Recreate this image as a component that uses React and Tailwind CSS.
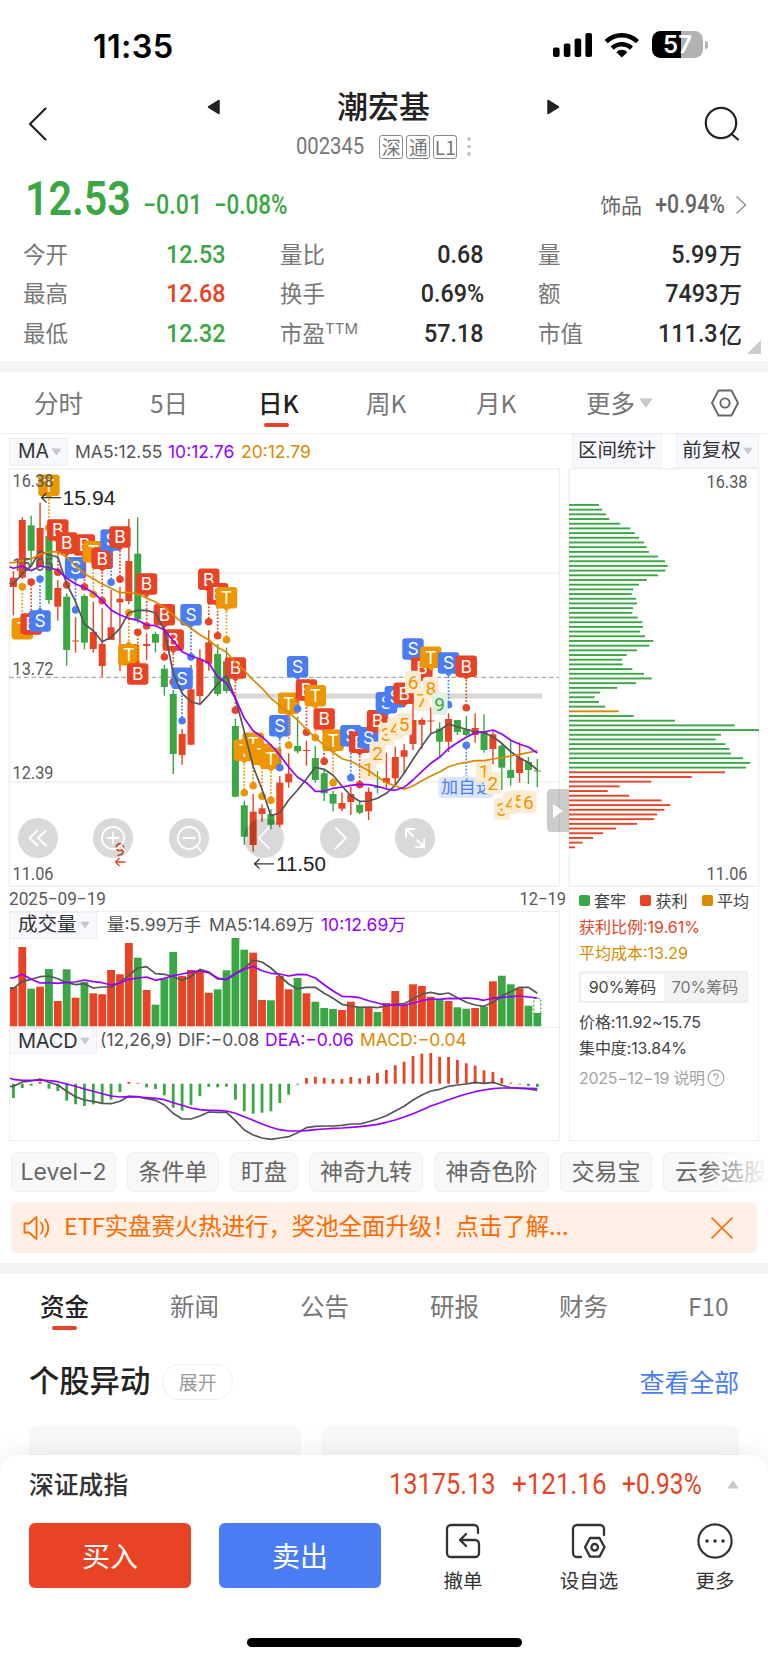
import clsx from 'clsx'

const RED = '#e84324'
const GREEN = '#3ba744'
const BLUE = '#4a7cf3'
const AMBER = '#ee9600'
const GOLD = '#d98a00'
const GREY = '#555555'
const PURPLE = '#9600ff'

const X0 = 13.4
const STEP = 8.88
const x = (i) => X0 + i * STEP

// [direction, high, body top, body bottom, low]
const CANDLES = [
  ['r', 571, 577.7, 587, 615.3], ['r', 517.3, 520, 577.7, 579], ['g', 515.7, 525.3, 550.7, 566], ['r', 502.7, 528, 566, 566.7],
  ['g', 534, 535.7, 600, 604], ['r', 580, 588, 606.7, 620.7], ['g', 593.3, 596.7, 650, 665.7], ['r', 617.3, 640.5, 641.5, 652.7],
  ['g', 594.3, 596, 642.7, 649.3], ['r', 601.7, 631.7, 649, 652.7], ['r', 608.3, 644, 666, 676.7], ['r', 590, 627.3, 640, 640],
  ['r', 586.7, 598.7, 602.3, 671], ['r', 519, 561, 601, 604.3], ['g', 517.3, 553.7, 619.3, 623.3], ['r', 633.3, 644, 646, 660],
  ['g', 631.7, 634, 642.7, 652.3], ['g', 665, 668.7, 687, 695.7], ['g', 690, 694, 754, 774], ['r', 729, 734, 755, 764.7],
  ['r', 665, 689.3, 744.7, 745], ['r', 649.3, 659, 696, 704], ['r', 630, 642.3, 663.7, 670.7], ['g', 644, 654, 694, 696],
  ['g', 647.7, 661.3, 691, 693.3], ['g', 718.7, 726, 796.7, 797.3], ['g', 800.7, 805.3, 836.7, 844.7], ['r', 794, 811.7, 845, 851.7],
  ['r', 804.3, 808.3, 814, 821.7], ['g', 809.3, 814, 824.7, 829.3], ['r', 776, 782.7, 824.7, 827], ['r', 753.3, 773.7, 782.3, 787.7],
  ['g', 716.7, 746, 751.3, 753.3], ['r', 740.7, 750, 751, 765.7], ['g', 746, 758, 780, 782.7], ['g', 770, 773.3, 793.3, 801],
  ['g', 790.7, 794, 803.7, 811.3], ['r', 792.7, 803, 808.7, 811.3], ['r', 786.7, 794, 802, 815], ['g', 801.7, 804.7, 812.7, 814.3],
  ['r', 787.7, 791.7, 811.3, 820], ['g', 771, 787, 788, 793.3], ['r', 752.7, 778, 782.7, 789.3], ['r', 746.7, 757, 778.3, 785.3],
  ['r', 744, 750.3, 756.7, 773.7], ['r', 702.7, 720, 744, 750], ['r', 717.7, 720, 724.7, 749], ['r', 707.3, 720.5, 721.5, 734],
  ['g', 722.3, 728.7, 741.7, 756.7], ['r', 713.3, 719, 741.7, 752], ['g', 720, 720, 732, 735], ['g', 716, 729.3, 735, 736],
  ['r', 713.3, 728, 735, 742.7], ['g', 714.3, 731, 750, 752.7], ['r', 730, 734.3, 749, 764.3], ['g', 743.3, 745.7, 767.7, 790],
  ['g', 741, 770, 778, 785.7], ['r', 742.3, 757.7, 773, 782.7], ['g', 756.7, 762, 770, 784], ['g', 759, 770.5, 771.5, 787],
]

const MA5 = [584, 573.7, 566, 551, 555, 557, 584, 601.7, 624, 630.7, 641.7, 637.3, 628.3, 612.7, 610.3, 610.3, 613, 630, 673, 693.3, 701.7, 704.3, 695, 684, 675.7, 698.3, 731.7, 766.7, 789.3, 815.7, 812.7, 800, 790, 779, 767.3, 769.3, 775.3, 786, 795.7, 801.3, 801, 798.3, 793.3, 785.3, 773.3, 759.3, 746, 733.7, 730.3, 724, 726.7, 729.3, 731.7, 732.7, 736.7, 743.3, 751.7, 758.3, 762.3, 770]
const MA10 = [568.3, 566, 570.7, 566, 567.7, 570, 578.3, 584, 587.7, 592.7, 600.7, 610, 615, 618.3, 620.3, 625, 625.7, 630, 640.7, 651.7, 656, 659, 663, 676.7, 683.3, 698.3, 718.3, 731, 736.7, 745, 755, 767, 777.3, 782.7, 791.3, 791.3, 788.3, 787, 785.3, 784.3, 784.7, 786.3, 789, 790.3, 787.3, 780, 771.3, 763.3, 757.3, 748.7, 742.7, 737.3, 732.7, 732, 730, 734, 740.3, 744.3, 747, 753]
const MA20 = [562.7, 560.7, 559, 554.3, 552, 551.7, 557.3, 566, 573.7, 578.7, 584, 588.3, 592.7, 592.3, 594, 598, 602, 607, 615, 622.3, 628.3, 634.7, 640, 647.3, 652.3, 662.3, 670.7, 680, 688.3, 698.3, 705.5, 712.7, 720, 729.3, 737.7, 745.3, 752.3, 758.7, 761.3, 765.7, 770.7, 776.7, 782.7, 785.7, 789.3, 786, 780.7, 776, 772, 766.7, 764, 762.3, 760.7, 760.7, 759, 757.7, 756, 754.3, 752.7, 750.7]

// [index, kind, badge centre, dot centre]
const MARKS = [
  [1, 'T', 628.7, 586.7], [2, 'B', 624, 582], [3, 'S', 621, 579], [4, 'T', 485.3, 527.7], [5, 'B', 530, 572.3], [6, 'B', 543, 585],
  [7, 'S', 567.7, 610], [8, 'B', 545, 587], [9, 'T', 551.7, 594.3], [10, 'B', 558.3, 600.7], [11, 'S', 540, 582.3], [12, 'B', 537, 579.3],
  [13, 'T', 654.7, 612.7], [14, 'B', 674, 632.3], [15, 'B', 584, 626], [17, 'B', 614.7, 657], [18, 'B', 640, 682], [19, 'S', 678.3, 720.7],
  [20, 'S', 614.7, 657], [22, 'B', 579.3, 621.7], [23, 'B', 593.7, 635.7], [24, 'T', 597.7, 639.7], [25, 'B', 668, 710.3],
  [26, 'T', 750.3, 792.7], [27, 'T', 743.3, 785.7], [28, 'T', 754.3, 796.3], [29, 'T', 758.3, 800.3], [30, 'S', 725.7, 767.7],
  [31, 'T', 703.3, 745.3], [32, 'S', 666.7, 708.7], [33, 'B', 690, 732.3], [34, 'T', 695.7, 737.7], [35, 'B', 719, 761.3],
  [36, 'T', 740.3, 782.7], [38, 'S', 735.7, 777.7], [39, 'B', 742.3, 784.7], [40, 'S', 737.7], [41, 'B', 720.7], [42, 'S', 702.7],
  [43, 'S', 696.7], [44, 'B', 693.3], [45, 'S', 649], [46, 'B', 668], [47, 'T', 657.3], [49, 'S', 663, 704.7], [51, 'B', 666.3, 707.7],
]
const MARK_COLOR = { B: RED, S: BLUE, T: AMBER }

// nine-turn counters: [candle, count, centre]
const TURNS = [
  [40, 1, 769.3], [41, 2, 752.7], [42, 3, 734], [43, 4, 728.3], [44, 5, 724.3], [45, 6, 682], [46, 7, 700], [47, 8, 688], [48, 9, 703.7],
  [53, 1, 771.3], [54, 2, 783], [55, 3, 809], [56, 4, 802.7], [57, 5, 801.3], [58, 6, 802.3],
]

const VOL = [987, 947, 988.7, 986.7, 969, 1001, 969.3, 997.7, 981.7, 993.3, 994.3, 970, 974.3, 943, 957.7, 990, 1004.7, 978.3, 952, 976, 970, 970, 992.7, 989.3, 970.3, 938, 949.7, 952.7, 1000, 1000.3, 976, 989.3, 978, 993.3, 1001.7, 1008, 1009, 1010, 1001.7, 1007.3, 1007, 1012, 1003, 991, 1005, 984.3, 986, 996.7, 999.7, 1001, 1007.3, 1008.7, 1008, 1006.7, 981.3, 975.7, 984.3, 988.3, 1005.7, 1013]
const VOL5 = [988.3, 981.3, 979.3, 976.7, 976, 978.7, 982.7, 984.7, 983.7, 988, 987, 987, 982.3, 975.3, 968, 966.7, 973.7, 974.3, 976.7, 980.3, 976.7, 969.3, 972, 979, 979.3, 973.3, 968.3, 960.3, 962, 968, 976, 984, 988.7, 987.3, 987.3, 993.3, 998.3, 1004.3, 1006, 1007.3, 1007, 1007.7, 1006, 1004.3, 1003.7, 999, 994, 992.3, 994.3, 993, 997.7, 1002.3, 1005, 1006.3, 1002.3, 996, 991.7, 987.3, 987.3, 993.3]
const VOL10 = [978, 974.3, 979.3, 983, 982.7, 983.3, 982.3, 982, 980, 981.7, 982.7, 985, 983, 979.3, 978, 977, 980.3, 978.3, 975.7, 974, 972, 971, 972.7, 978, 979.7, 974, 969.3, 966.3, 970.7, 973.3, 974, 976, 974.3, 974.7, 978, 984.7, 991, 996.3, 996.7, 997.7, 1000.7, 1003, 1005.3, 1005, 1005.3, 1003, 1000.7, 999, 999.3, 998.3, 998.7, 998, 998.7, 1000.3, 998, 997.3, 996.7, 996, 997, 998]

const ZERO = 1083.7
const HIST = [1098, 1088, 1085.7, 1081.7, 1088.7, 1091, 1100.7, 1104.3, 1106, 1104.3, 1103.7, 1099.7, 1092, 1082, 1083, 1087.3, 1089, 1095.3, 1107.7, 1110.7, 1105, 1096, 1087, 1087.3, 1086.7, 1099.7, 1111.3, 1113.7, 1112.7, 1111.3, 1103, 1094.7, 1084.7, 1078, 1076.7, 1077.7, 1079, 1079, 1077, 1078.3, 1075.7, 1073, 1070, 1065.3, 1061.7, 1056, 1053.7, 1052.7, 1056.7, 1057, 1060, 1063.3, 1065.7, 1070.3, 1072, 1078, 1082.7, 1084.5, 1086, 1087]
const DIF = [1086.3, 1082, 1081, 1079, 1082.3, 1085, 1091.3, 1096.7, 1100, 1101.3, 1103.3, 1103.7, 1101.3, 1096.3, 1096.7, 1098.7, 1100.3, 1105, 1113.3, 1119, 1119, 1116, 1112, 1112.3, 1112.3, 1120.7, 1130, 1135, 1138, 1139.3, 1138, 1136.7, 1132.7, 1127.7, 1126.3, 1126, 1126, 1125.3, 1124, 1124, 1121.7, 1119, 1115.7, 1111, 1106.3, 1100, 1095, 1091, 1089.3, 1086.3, 1085, 1084, 1082.3, 1083.3, 1082.3, 1085.3, 1087.7, 1088.3, 1089, 1090.3]
const DEA = [1079.3, 1080.3, 1080.3, 1080, 1080.7, 1081.7, 1084, 1086.3, 1089, 1091.3, 1093.7, 1096, 1097, 1096.7, 1097, 1097.7, 1098.3, 1099.7, 1102.7, 1105.3, 1108, 1109.7, 1110.3, 1110.3, 1111, 1113.3, 1116.7, 1120.3, 1124, 1127.3, 1129.7, 1131, 1131, 1130.7, 1129.7, 1129, 1128.3, 1128, 1127.3, 1126.7, 1125.7, 1124.3, 1122.3, 1120, 1117, 1113.7, 1110, 1106, 1103, 1099.7, 1096.7, 1094, 1091.7, 1090, 1088.7, 1088, 1088, 1088, 1088.3, 1088.7]

const CHIPS = [30, 33.3, 37, 40.3, 51.3, 61.3, 65.7, 70, 75, 77.7, 80, 89, 96, 98.7, 96.3, 89, 77.7, 70, 64.3, 62.7, 67, 68, 64, 63.3, 68.7, 73.3, 74, 71, 76, 84.3, 80.3, 68, 57.7, 53, 53.7, 63.3, 75, 82.7, 67, 48.3, 31, 25.7, 30, 36.3, 49.7, 64.7, 106, 165.7, 190, 152, 146.7, 156.3, 160.3, 162, 174, 181.3, 177, 156, 122.7, 82.3, 50.7, 38.7, 60.3, 92.7, 101.3, 95.3, 88, 85, 68, 47, 34, 24, 13.7, 6]

const QUOTES = [
  [['今开', '12.53', 'text-[#3ba744]'], ['量比', '0.68'], ['量', '5.99', '', '万']],
  [['最高', '12.68', 'text-[#e84324]'], ['换手', '0.69%'], ['额', '7493', '', '万']],
  [['最低', '12.32', 'text-[#3ba744]'], ['市盈', '57.18'], ['市值', '111.3', '', '亿']],
]

const TOOLS = [
  ['Level−2', 'w-[105px]'], ['条件单', 'w-[92px]'], ['盯盘', 'w-[68px]'], ['神奇九转', 'w-[114px]'],
  ['神奇色阶', 'w-[115px]'], ['交易宝', 'w-[92px]'], ['云参选股', 'w-[116px]'],
]

const line = (ys) => ys.map((y, i) => `${x(i).toFixed(1)},${y}`).join(' ')

function Line({ ys, color, start }) {
  return <polyline points={`9.5,${start ?? ys[0]} ${line(ys)}`} fill="none" stroke={color} strokeWidth="1.7" strokeLinejoin="round" />
}

function Caret({ className }) {
  return (
    <svg viewBox="0 0 12 9" className={clsx('shrink-0', className)}>
      <path d="M1 1h10L6 8z" fill="#c9c9c9" stroke="#c9c9c9" strokeLinejoin="round" />
    </svg>
  )
}

function AxisText({ x: tx, y, w = 41, children }) {
  return (
    <text x={tx} y={y + 6.4} textLength={w} lengthAdjust="spacingAndGlyphs" fontFamily="Roboto" fontSize="18" fill="#5a5a5a">{children}</text>
  )
}

function Mark({ i, kind, y, dot }) {
  const cx = x(i)
  const c = MARK_COLOR[kind]
  const up = dot !== undefined && dot < y
  const dir = up ? -1 : 1
  return (
    <g>
      {dot !== undefined && (
        <>
          <line x1={cx} x2={cx} y1={y} y2={dot} stroke={c} strokeWidth="1.7" strokeDasharray="1.7 1.7" />
          <circle cx={cx} cy={dot} r="3.8" fill={c} />
        </>
      )}
      <rect x={cx - 10.7} y={y - 10.7} width="21.4" height="21.4" rx="3" fill={c} />
      <path d={`M${cx - 3.5} ${y + dir * 10.5}h7l-3.5 ${dir * 3}z`} fill={c} />
      <text x={cx} y={y + 6.2} textAnchor="middle" fontFamily="Inter" fontSize="17.5" fill="#fff">{kind}</text>
    </g>
  )
}

function KChart() {
  return (
    <svg viewBox="0 468 569 420" className="block h-[420px] w-[569px]">
      <g fill="none" stroke="#efefef" strokeWidth="1.4">
        <rect x="9.3" y="468.8" width="550.2" height="417.4" />
        <path d="M9 573.3h550M9 782h550" />
      </g>
      <path d="M9 677.4h550" stroke="#aaa" strokeWidth="1.2" strokeDasharray="4.5 3" />
      <rect x="236" y="693.5" width="306" height="5" fill="#d8d8d8" />

      {CANDLES.map(([d, hi, top, bot, lo], i) => {
        const c = d === 'r' ? RED : GREEN
        return (
          <g key={i} fill={c}>
            <rect x={x(i) - 0.7} y={hi} width="1.4" height={lo - hi} />
            <rect x={x(i) - 3.5} y={top} width="7" height={bot - top} />
          </g>
        )
      })}

      {MARKS.map(([i, kind, y, dot]) => <Mark key={i} i={i} kind={kind} y={y} dot={dot} />)}

      {/* add-to-watchlist hint under the latest signal */}
      <line x1="466.3" x2="466.3" y1="745" y2="776" stroke={BLUE} strokeWidth="1.6" strokeDasharray="1.7 1.7" />
      <circle cx="466.3" cy="745.3" r="3.8" fill={BLUE} />
      <path d="M462 777l4.3-4 4.3 4z" fill="#dbe5fd" />
      <rect x="438.5" y="777" width="55" height="21" rx="3" fill="#dbe5fd" />
      <text x="441" y="792.5" fontFamily="Noto Sans CJK SC" fontSize="17" letterSpacing="0.6" fill={BLUE}>加自选</text>

      {TURNS.map(([i, n, y]) => (
        <g key={i}>
          <rect x={x(i) - 8} y={y - 11.3} width="16" height="22.6" rx="3.5" fill={n === 9 ? '#e0f2e2' : '#fcebd3'} />
          <text x={x(i)} y={y + 6.8} textAnchor="middle" fontFamily="Roboto" fontSize="19" fill={n === 9 ? GREEN : AMBER}>{n}</text>
        </g>
      ))}

      <Line ys={MA5} color={GREY} start={583} />
      <Line ys={MA20} color={GOLD} />
      <Line ys={MA10} color={PURPLE} start={566.7} />

      <AxisText x={12.5} y={481}>16.38</AxisText>
      <AxisText x={12.5} y={564.3}>15.05</AxisText>
      <AxisText x={12.5} y={669}>13.72</AxisText>
      <AxisText x={12.5} y={773}>12.39</AxisText>
      <AxisText x={12.5} y={873.8}>11.06</AxisText>

      <g fill="none" stroke="#333" strokeWidth="1.3">
        <path d="M61 497.7H41.5M46.5 493l-5 4.7 5 4.7" />
        <path d="M274 863.8H254.5M259.5 859l-5 4.8 5 4.8" />
      </g>
      <g fontFamily="Liberation Sans" fontSize="20.5" fill="#222">
        <text x="62.5" y="505" textLength="53" lengthAdjust="spacingAndGlyphs">15.94</text>
        <text x="276" y="871.3" textLength="50" lengthAdjust="spacingAndGlyphs">11.50</text>
      </g>

      <text x="120" y="856" textAnchor="middle" fontFamily="Roboto" fontSize="19" fill={RED}>9</text>
      <path d="M125.5 862h-10m4-4-4 4 4 4" fill="none" stroke={RED} strokeWidth="1.3" />
    </svg>
  )
}

const NAV_ICONS = [
  'M19.5 12.5 11.5 20l8 7.5M28 12.5 20 20l8 7.5',
  'M20 9a11 11 0 1 0 .01 0M28 28l4 5M20 14.5v11M14.5 20h11',
  'M20 9a11 11 0 1 0 .01 0M28 28l4 5M14.5 20h11',
  'M25 9.5 15 20l10 10.5',
  'M15.5 9.5 26 20 15.5 30.5',
  'M11 19v-8h8M11 11l7 7M29 21v8h-8M29 29l-7-7',
]

function ChartNav() {
  return (
    <div className="absolute top-[350px] left-[18px] flex gap-[35.4px]">
      {NAV_ICONS.map((d) => (
        <button key={d} className="size-10 rounded-full bg-black/15">
          <svg viewBox="0 0 40 40" className="size-10" fill="none" stroke="#fff" strokeWidth="1.8" strokeLinecap="round" strokeLinejoin="round">
            <path d={d} />
          </svg>
        </button>
      ))}
    </div>
  )
}

function VolumeChart() {
  return (
    <svg viewBox="0 938 569 89" className="block h-[89px] w-[569px]">
      {VOL.map((y, i) => (
        <rect key={i} x={x(i) - 3.9} y={y} width="7.8" height={1026.3 - y} fill={CANDLES[i][0] === 'r' ? RED : GREEN} />
      ))}
      <rect x="533.8" y="998.5" width="7" height="15" fill="none" stroke={GREEN} strokeWidth="1.2" strokeDasharray="2 2" />
      <Line ys={VOL5} color={GREY} />
      <Line ys={VOL10} color={PURPLE} />
    </svg>
  )
}

function MacdChart() {
  return (
    <svg viewBox="0 1053 569 88" className="block h-[88px] w-[569px]">
      {HIST.map((y, i) => (
        <rect key={i} x={x(i) - 1.4} y={Math.min(y, ZERO)} width="2.8" height={Math.abs(y - ZERO)} fill={y < ZERO ? RED : GREEN} />
      ))}
      <Line ys={DIF} color={GREY} />
      <Line ys={DEA} color={PURPLE} start={1078.3} />
    </svg>
  )
}

function ChipChart() {
  return (
    <svg viewBox="568 468 200 419" className="block h-[419px] w-[200px]">
      <rect x="569.2" y="468.8" width="189.5" height="417.4" fill="none" stroke="#efefef" strokeWidth="1.4" />
      {CHIPS.map((w, i) => (
        <rect key={i} x="569" y={504 + i * 4.69} width={w} height="1.9" fill={i === 44 ? GOLD : i > 56 ? RED : GREEN} />
      ))}
      <AxisText x={706.5} y={481.5}>16.38</AxisText>
      <AxisText x={706.5} y={874}>11.06</AxisText>
    </svg>
  )
}

function StatusBar() {
  return (
    <div className="flex h-[90px] justify-between pt-[29px] pr-[60px] pl-[93px]">
      <div className="font-[Inter] text-[32.5px] leading-[36px] font-semibold tracking-[0.3px] text-black">11:35</div>
      <div className="flex items-start pt-0.5">
        <svg viewBox="0 0 41 26" className="mt-[1px] h-[26px] w-[41px]">
          <rect x="1" y="15.5" width="6.6" height="9.5" rx="2" />
          <rect x="11.8" y="11.5" width="6.600" height="13.5" rx="2" />
          <rect x="22.6" y="6.5" width="6.600" height="18.5" rx="2" />
          <rect x="33.4" y="1" width="6.600" height="24" rx="2" />
        </svg>
        <svg viewBox="0 0 36 26" className="mt-[1px] ml-[11px] h-[26px] w-[36px]" fill="none" stroke="#000" strokeWidth="4.6">
          <path d="M2.2 9.6a22.5 22.5 0 0 1 31.2 0M8.2 16.2a13.8 13.8 0 0 1 19.2 0" />
          <path d="M17.8 25.6l-5.500-5.400a7.500 7.500 0 0 1 11 0z" fill="#000" stroke="none" />
        </svg>
        <div className="ml-[12px] flex h-[27px] w-[51px] items-center justify-center rounded-[8.5px] bg-linear-to-r from-black from-56% to-[#b2b2b2] to-56% font-[Inter] text-[24px] leading-none font-semibold text-white">57</div>
        <div className="mt-[10px] ml-[2px] h-[8px] w-[3px] rounded-r-full bg-[#b2b2b2]" />
      </div>
    </div>
  )
}

function Header() {
  return (
    <div className="flex h-[85px] items-start justify-between pr-[28px] pl-[28px]">
      <svg viewBox="0 0 20 36" className="mt-[16px] h-[36px] w-5" fill="none" stroke="#222" strokeWidth="2.2" strokeLinecap="round" strokeLinejoin="round">
        <path d="M17.5 2.5 2 18l15.5 15.5" />
      </svg>
      <div className="ml-[15px] flex w-[353px] flex-col items-center">
        <div className="-mt-[3px] flex h-[39px] w-full items-center justify-between">
          <svg viewBox="0 0 13 16" className="mt-px h-4 w-[13px]"><path d="M12 1.5v13L1.5 8z" fill="#222" stroke="#222" strokeLinejoin="round" strokeWidth="1.5" /></svg>
          <h1 className="-mt-[3px] text-[31px] leading-[36px] font-medium text-[#222]">潮宏基</h1>
          <svg viewBox="0 0 13 16" className="mt-px h-4 w-[13px]"><path d="M1 1.5v13L11.5 8z" fill="#222" stroke="#222" strokeLinejoin="round" strokeWidth="1.5" /></svg>
        </div>
        <div className="mt-[8px] flex h-[25px] items-center text-[#777]">
          <span className="w-[83px]">
            <span className="inline-block origin-left scale-x-[.86] font-[Roboto] text-[23.5px]">002345</span>
          </span>
          <div className="flex gap-[3px] text-[19px]">
            {['深', '通', 'L1'].map((t) => (
              <span key={t} className="flex h-[24px] w-[24px] items-center justify-center rounded-[3px] border border-[#8a8a8a] leading-none">{t}</span>
            ))}
          </div>
          <div className="ml-[10px] flex flex-col gap-[4px]">
            <i className="size-[3.5px] rounded-full bg-[#c4c4c4]" />
            <i className="size-[3.5px] rounded-full bg-[#c4c4c4]" />
            <i className="size-[3.5px] rounded-full bg-[#c4c4c4]" />
          </div>
        </div>
      </div>
      <svg viewBox="0 0 36 36" className="mt-[16px] size-9" fill="none" stroke="#222" strokeWidth="2.2" strokeLinecap="round">
        <circle cx="17" cy="17" r="15.2" />
        <path d="M27.5 28l6.5 5.5" />
      </svg>
    </div>
  )
}

function Quote() {
  return (
    <div className="relative h-[186px] pr-[26px] pl-[23px]">
      <div className="flex h-[49px] items-end text-[#3ba744]">
        <span className="ml-[2px] w-[118px]">
          <span className="inline-block origin-left scale-x-[.84] font-[Roboto] text-[49px] leading-[50px] font-semibold">12.53</span>
        </span>
        <span className="w-[71px]">
          <span className="inline-block origin-left scale-x-[.86] font-[Roboto] text-[27px] leading-[38px] font-medium">−0.01</span>
        </span>
        <span>
          <span className="inline-block origin-left scale-x-[.83] font-[Roboto] text-[27px] leading-[38px] font-medium">−0.08%</span>
        </span>
        <div className="-mr-[5px] ml-auto flex h-[38px] items-center text-[#666]">
          <span className="text-[21px]">饰品</span>
          <span className="ml-[1px] inline-block origin-right scale-x-[.85] font-[Roboto] text-[25px] font-medium">+0.94%</span>
          <svg viewBox="0 0 12 20" className="ml-[10px] h-5 w-3" fill="none" stroke="#999" strokeWidth="1.6">
            <path d="M1.5 1.5 10.5 10l-9 8.5" />
          </svg>
        </div>
      </div>
      <div className="mt-[10px] flex flex-col">
        {QUOTES.map((row) => (
          <div key={row[0][0]} className="flex h-[39.5px] items-center justify-between">
            {row.map(([label, value, cls, unit], i) => (
              <div key={label} className={clsx('flex items-center justify-between', i === 0 ? 'w-[203px]' : 'w-[204px]')}>
                <span className="text-[22.5px] text-[#777]">
                  {label}
                  {label === '市盈' && <sup className="font-[Inter] text-[15px]">TTM</sup>}
                </span>
                <span className={clsx('flex items-center', cls || 'text-[#2b2b2b]')}>
                  <span className="inline-block origin-right scale-x-[.88] font-[Roboto] text-[26.5px] font-medium">{value}</span>
                  {unit && <span className="ml-[1px] text-[23px] font-medium">{unit}</span>}
                </span>
              </div>
            ))}
          </div>
        ))}
      </div>
      <svg viewBox="0 0 14 14" className="absolute right-[7px] bottom-[7px] size-[14px]"><path d="M14 0v14H0z" fill="#ccc" /></svg>
    </div>
  )
}

function PeriodTabs() {
  return (
    <div className="flex h-[62px] items-center border-b-[1.5px] border-[#f0f0f0] pt-[1px] pl-[34px] text-[24.5px] text-[#777]">
      <span className="w-[116px]">分时</span>
      <span className="w-[108px]">5日</span>
      <span className="relative w-[108px] font-medium text-[#222]">
        日K
        <i className="absolute bottom-[-6px] left-[6px] h-1 w-[25px] rounded-full bg-[#e84324]" />
      </span>
      <span className="w-[110px]">周K</span>
      <span className="w-[110px]">月K</span>
      <span className="flex w-[125px] items-center">更多<Caret className="ml-1 h-[10px] w-[14px]" /></span>
      <svg viewBox="0 0 28 28" className="size-7" fill="none" stroke="#666" strokeWidth="1.9" strokeLinejoin="round">
        <path d="M7.5 1.5h13L27 14l-6.5 12.5h-13L1 14z" />
        <circle cx="14" cy="14" r="4.6" />
      </svg>
    </div>
  )
}

function IndicatorBar() {
  return (
    <div className="flex h-[34px] items-center pl-[9px] font-[Inter,'Noto_Sans_CJK_SC'] text-[17.5px]">
      <span className="mt-[2px] flex h-[28px] w-[59px] items-center gap-[2px] border border-[#efefef] bg-[#f8f9fe] pl-[8px] text-[19.5px] text-[#333]">
        MA<Caret className="h-2 w-[11px]" />
      </span>
      <span className="mt-[3px] ml-[7px] w-[93px] text-[#555]">MA5:12.55</span>
      <span className="mt-[3px] w-[73px] text-[#9600ff]">10:12.76</span>
      <span className="mt-[3px] text-[#d98a00]">20:12.79</span>
      <span className="ml-auto flex h-[34px] w-[90px] items-center justify-center border border-[#efefef] bg-[#f8f9fe] text-[19.5px] text-[#333]">区间统计</span>
      <span className="mr-[9px] ml-[14px] flex h-[34px] w-[83px] items-center justify-center gap-[2px] border border-[#efefef] bg-[#f8f9fe] text-[19.500px] text-[#333]">
        前复权<Caret className="h-2 w-[10px]" />
      </span>
    </div>
  )
}

function ChipInfo() {
  return (
    <div className="ml-[1px] h-[254px] w-[190px] border-x-[1.4px] border-b-[1.4px] border-[#efefef] pr-[9px] pl-[9px] font-[Inter,'Noto_Sans_CJK_SC'] text-[16px] text-[#444]">
      <div className="flex h-[27px] items-center justify-between">
        <span className="flex items-center gap-[4px]"><i className="size-[11px] rounded-[2px] bg-[#3ba744]" />套牢</span>
        <span className="flex items-center gap-[4px]"><i className="size-[11px] rounded-[2px] bg-[#e84324]" />获利</span>
        <span className="flex items-center gap-[4px]"><i className="size-[11px] rounded-[2px] bg-[#d98a00]" />平均</span>
      </div>
      <div className="h-[26px] leading-[26px] text-[#e84324]">获利比例:19.61%</div>
      <div className="h-[26px] leading-[26px] text-[#d98a00]">平均成本:13.29</div>
      <div className="mt-[5px] flex h-[32px] w-[169px] items-center rounded-[3px] border-2 border-[#eee] bg-[#f3f3f3] text-[#777]">
        <span className="flex h-[27px] w-[83px] items-center justify-center rounded-[3px] bg-white text-[#444]">90%筹码</span>
        <span className="flex flex-1 items-center justify-center">70%筹码</span>
      </div>
      <div className="mt-[6px] h-[26px] leading-[26px] tracking-[-0.1px]">价格:11.92~15.75</div>
      <div className="h-[26px] leading-[26px] tracking-[-0.1px]">集中度:13.84%</div>
      <div className="mt-[4px] flex h-[26px] items-center tracking-[-0.3px] text-[#a3a3a3]">
        2025−12−19 说明
        <svg viewBox="0 0 18 18" className="ml-[2px] size-[18px]" fill="none" stroke="#a3a3a3" strokeWidth="1.2">
          <circle cx="9" cy="9" r="7.9" />
          <path d="M6.6 7.2a2.4 2.4 0 1 1 3.6 2.1c-.8.5-1.2.8-1.2 1.7M9 12.4v1.3" />
        </svg>
      </div>
    </div>
  )
}

function Charts() {
  return (
    <div className="flex h-[673px]">
      <div className="relative w-[568px] shrink-0">
        <div className="relative">
          <KChart />
          <ChartNav />
          <div className="absolute top-[321px] left-[547px] flex h-[43px] w-[22px] items-center justify-center rounded-l-[4px] bg-black/20">
            <svg viewBox="0 0 10 14" className="h-[14px] w-[10px]"><path d="M0 0l10 7-10 7z" fill="#fff" /></svg>
          </div>
        </div>
        <svg viewBox="0 888 569 23" className="block h-[23px] w-[569px]">
          <AxisText x={9} y={899} w={97}>2025−09−19</AxisText>
          <AxisText x={519.5} y={899} w={46.5}>12−19</AxisText>
        </svg>
        <div className="relative ml-[9px] flex h-[27px] w-[551px] items-center border border-b-0 border-[#efefef] font-[Inter,'Noto_Sans_CJK_SC'] text-[17.5px] text-[#555]">
          <span className="-ml-px flex h-[27px] w-[88px] items-center gap-[3px] border border-[#efefef] bg-[#f8f9fe] pl-[8px] text-[19.5px] text-[#333]">成交量<Caret className="h-2 w-[10px]" /></span>
          <span className="ml-[10px] w-[102px]">量:5.99万手</span>
          <span className="w-[112px]">MA5:14.69万</span>
          <span className="text-[#9600ff]">10:12.69万</span>
        </div>
        <VolumeChart />
        <div className="ml-[9px] flex h-[26px] w-[551px] items-center border border-b-0 border-[#efefef] font-[Inter,'Noto_Sans_CJK_SC'] text-[17.5px] text-[#555]">
          <span className="-ml-px flex h-[26px] w-[88px] items-center gap-[3px] border border-[#efefef] bg-[#f8f9fe] pl-[8px] text-[20px] tracking-[-0.2px] text-[#333]">MACD<Caret className="h-2 w-[10px]" /></span>
          <span className="ml-[3px] w-[78px]">(12,26,9)</span>
          <span className="w-[87px]">DIF:−0.08</span>
          <span className="w-[95px] text-[#9600ff]">DEA:−0.06</span>
          <span className="text-[#d98a00]">MACD:−0.04</span>
        </div>
        <MacdChart />
        {/* side borders of the two lower panes */}
        <div className="pointer-events-none absolute top-[444px] left-[9px] h-[229px] w-[551px] border-x border-b border-[#efefef]" />
      </div>
      <div className="w-[200px]">
        <ChipChart />
        <ChipInfo />
      </div>
    </div>
  )
}

function ToolStrip() {
  return (
    <div className="relative mt-[11px] flex h-[40px] gap-[11px] overflow-hidden pl-[11px]">
      {TOOLS.map(([t, w]) => (
        <span key={t} className={clsx('flex shrink-0 items-center justify-center rounded-[7px] border border-[#efefef] bg-[#f8f8f8] font-[Inter,"Noto_Sans_CJK_SC"] text-[23px] whitespace-nowrap text-[#666]', w)}>
          {t}
        </span>
      ))}
      <div className="absolute inset-y-0 right-0 w-[64px] bg-linear-to-r from-white/0 to-white" />
    </div>
  )
}

function Notice() {
  return (
    <div className="mx-[11px] mt-[10px] flex h-[51px] items-center rounded-[7px] bg-[#ffefe5] text-[#ff6a00]">
      <svg viewBox="0 0 28 26" className="ml-[12px] h-[26px] w-7" fill="none" stroke="#ff6a00" strokeWidth="1.8" strokeLinecap="round" strokeLinejoin="round">
        <path d="M1.5 8.5H6l7.5-6.5v22L6 17.5H1.5zM18 7.5c2.5 3 2.5 8 0 11M22 4.5c4.4 5 4.4 12 0 17" />
      </svg>
      <span className="-mt-[3px] ml-[13px] text-[23.4px]">ETF实盘赛火热进行，奖池全面升级！点击了解...</span>
      <svg viewBox="0 0 22 22" className="mr-[24px] ml-auto size-[22px]" fill="none" stroke="#ff6a00" strokeWidth="1.7" strokeLinecap="round">
        <path d="M1 1l20 20M21 1 1 21" />
      </svg>
    </div>
  )
}

function InfoTabs() {
  return (
    <div className="flex h-[64px] items-center pl-[40px] text-[24.5px] text-[#777]">
      <span className="relative w-[130px] font-medium text-[#222]">
        资金
        <i className="absolute bottom-[-6px] left-[12px] h-1 w-[25px] rounded-full bg-[#e84324]" />
      </span>
      <span className="w-[130px]">新闻</span>
      <span className="w-[130px]">公告</span>
      <span className="w-[129px]">研报</span>
      <span className="w-[129px]">财务</span>
      <span>F10</span>
    </div>
  )
}

function BottomSheet() {
  return (
    <div className="relative h-[207px] rounded-t-[18px] bg-white shadow-[0_0_30px_rgba(0,0,0,0.09)]">
      <div className="flex h-[58px] items-center pr-[28px] pl-[29px] text-[#e84324]">
        <span className="text-[24.8px] font-medium text-[#333]">深证成指</span>
        <span className="ml-[261px] w-[123px]"><span className="inline-block origin-left scale-x-[.86] font-[Roboto] text-[29.5px]">13175.13</span></span>
        <span className="w-[110px]"><span className="inline-block origin-left scale-x-[.88] font-[Roboto] text-[29.5px]">+121.16</span></span>
        <span className="w-[90px]"><span className="inline-block origin-left scale-x-[.83] font-[Roboto] text-[29.5px]">+0.93%</span></span>
        <svg viewBox="0 0 12 9" className="ml-auto h-[9px] w-[14px] shrink-0"><path d="M1 8h10L6 1z" fill="#c9c9c9" stroke="#c9c9c9" strokeLinejoin="round" /></svg>
      </div>
      <div className="mt-[10px] flex h-[65px] text-[19.5px] text-[#333]">
        <button className="ml-[29px] w-[162px] rounded-[6px] bg-[#e84324] pb-[2px] text-[28px] text-white">买入</button>
        <button className="ml-[28px] w-[162px] rounded-[6px] bg-[#4a7cf3] pb-[2px] text-[28px] text-white">卖出</button>
        <div className="ml-[42px] flex w-[80px] flex-col items-center">
          <svg viewBox="0 0 36 36" className="size-9 shrink-0" fill="none" stroke="#333" strokeWidth="2.3" strokeLinecap="round" strokeLinejoin="round">
            <path d="M33 10V6a4 4 0 0 0-4-4H6a4 4 0 0 0-4 4v24a4 4 0 0 0 4 4h24a4 4 0 0 0 4-4V21a4 4 0 0 0-4-4H16M21 11l-6 6 6 6" />
          </svg>
          <span className="leading-[41px]">撤单</span>
        </div>
        <div className="ml-[46px] flex w-[80px] flex-col items-center">
          <svg viewBox="0 0 36 36" className="size-9 shrink-0" fill="none" stroke="#333" strokeWidth="2.3" strokeLinecap="round" strokeLinejoin="round">
            <path d="M33 12V6a4 4 0 0 0-4-4H6a4 4 0 0 0-4 4v24a4 4 0 0 0 4 4h4" />
            <path d="M19 15h9.5l5 9.3-5 9.3H19l-5-9.3z" />
            <circle cx="23.7" cy="24.3" r="3.3" />
          </svg>
          <span className="leading-[41px]">设自选</span>
        </div>
        <div className="ml-[46px] flex w-[80px] flex-col items-center">
          <svg viewBox="0 0 36 36" className="size-9 shrink-0" fill="none" stroke="#333" strokeWidth="2.2">
            <circle cx="18" cy="18" r="16.6" />
            <path d="M10 18h.01M18 18h.01M26 18h.01" strokeWidth="3.6" strokeLinecap="round" />
          </svg>
          <span className="leading-[41px]">更多</span>
        </div>
      </div>
      <div className="mx-auto mt-[50px] h-[9px] w-[275px] rounded-full bg-black" />
    </div>
  )
}

export default function App() {
  return (
    <div className="h-[1662px] w-[768px] overflow-hidden bg-white font-['Noto_Sans_CJK_SC',sans-serif]">
      <StatusBar />
      <Header />
      <Quote />
      <div className="h-[11px] bg-[#f4f4f4]" />
      <PeriodTabs />
      <IndicatorBar />
      <Charts />
      <ToolStrip />
      <Notice />
      <div className="mt-[10px] h-[11px] bg-[#f4f4f4]" />
      <InfoTabs />
      <div className="mt-[24px] flex h-[40px] items-center pr-[29px] pl-[29px]">
        <h2 className="-mt-[4px] text-[30.3px] font-medium text-[#222]">个股异动</h2>
        <span className="ml-[12px] flex h-[36px] w-[71px] items-center justify-center rounded-full border border-[#eee] text-[19px] text-[#999]">展开</span>
        <span className="ml-auto text-[24.8px] text-[#4a7cf3]">查看全部</span>
      </div>
      <div className="mt-[24px] flex h-[29px] gap-[21px] pl-[29px]">
        <div className="w-[272px] rounded-t-[7px] bg-[#f7f8fa]" />
        <div className="w-[417px] rounded-t-[7px] bg-[#f7f8fa]" />
      </div>
      <BottomSheet />
    </div>
  )
}
